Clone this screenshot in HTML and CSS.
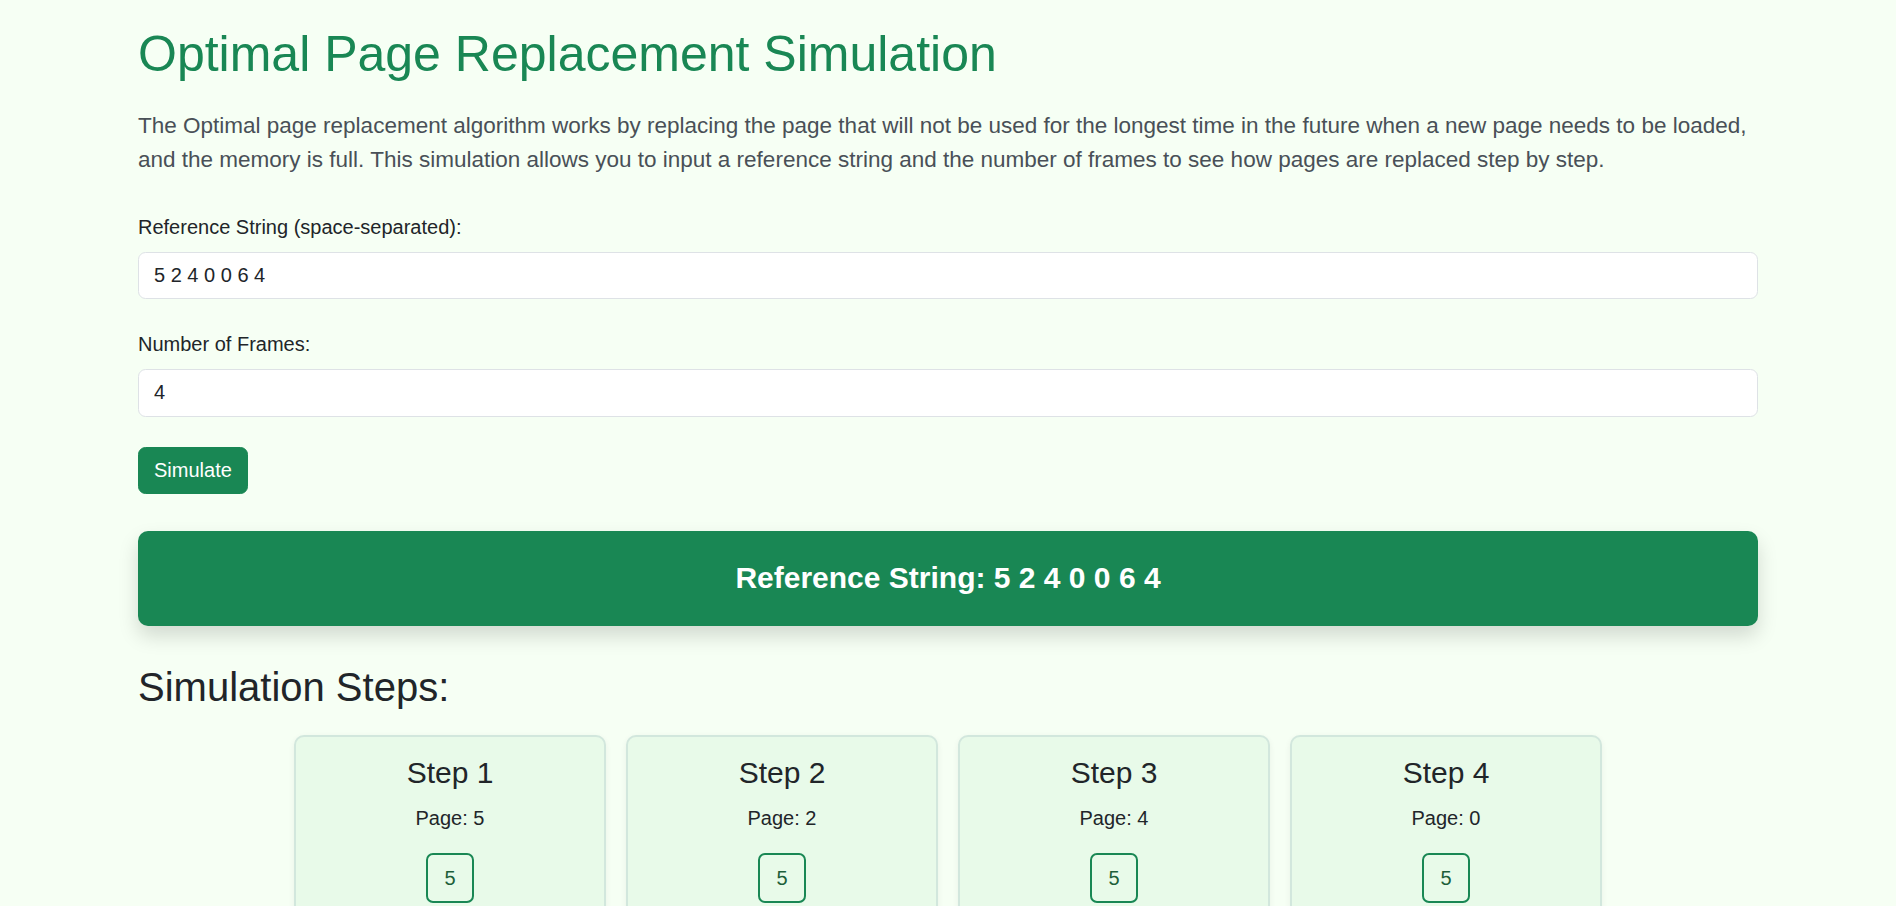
FILE: index.html
```html
<!DOCTYPE html>
<html lang="en">
<head>
<meta charset="utf-8">
<title>Optimal Page Replacement Simulation</title>
<link rel="stylesheet" href="styles.css">
</head>
<body>
<div class="container">
  <h1 class="title">Optimal Page Replacement Simulation</h1>
  <p class="lead">The Optimal page replacement algorithm works by replacing the page that will not be used for the longest time in the future when a new page needs to be loaded, and the memory is full. This simulation allows you to input a reference string and the number of frames to see how pages are replaced step by step.</p>

  <div class="field">
    <label class="form-label" for="ref">Reference String (space-separated):</label>
    <input class="form-control" id="ref" type="text" value="5 2 4 0 0 6 4">
  </div>
  <div class="field">
    <label class="form-label" for="frames">Number of Frames:</label>
    <input class="form-control" id="frames" type="text" value="4">
  </div>
  <button class="btn" type="button">Simulate</button>

  <div class="banner">
    <h4 class="banner-text">Reference String: 5 2 4 0 0 6 4</h4>
  </div>

  <h2 class="steps-title">Simulation Steps:</h2>

  <div class="steps">
    <div class="step-card">
      <h4 class="step-title">Step 1</h4>
      <p class="step-page">Page: 5</p>
      <div class="frames"><div class="frame">5</div></div>
    </div>
    <div class="step-card">
      <h4 class="step-title">Step 2</h4>
      <p class="step-page">Page: 2</p>
      <div class="frames"><div class="frame">5</div><div class="frame">2</div></div>
    </div>
    <div class="step-card">
      <h4 class="step-title">Step 3</h4>
      <p class="step-page">Page: 4</p>
      <div class="frames"><div class="frame">5</div><div class="frame">2</div><div class="frame">4</div></div>
    </div>
    <div class="step-card">
      <h4 class="step-title">Step 4</h4>
      <p class="step-page">Page: 0</p>
      <div class="frames"><div class="frame">5</div><div class="frame">2</div><div class="frame">4</div><div class="frame">0</div></div>
    </div>
    <div class="step-card">
      <h4 class="step-title">Step 5</h4>
      <p class="step-page">Page: 0</p>
      <div class="frames"><div class="frame">5</div><div class="frame">2</div><div class="frame">4</div><div class="frame">0</div></div>
    </div>
    <div class="step-card">
      <h4 class="step-title">Step 6</h4>
      <p class="step-page">Page: 6</p>
      <div class="frames"><div class="frame">6</div><div class="frame">2</div><div class="frame">4</div><div class="frame">0</div></div>
    </div>
    <div class="step-card">
      <h4 class="step-title">Step 7</h4>
      <p class="step-page">Page: 4</p>
      <div class="frames"><div class="frame">6</div><div class="frame">2</div><div class="frame">4</div><div class="frame">0</div></div>
    </div>
  </div>
</div>
</body>
</html>
```

FILE: styles.css
```css
* {
  box-sizing: border-box;
}

html, body {
  margin: 0;
  padding: 0;
}

body {
  background: #f6fff4;
  color: #212529;
  font-family: "Liberation Sans", Arial, Helvetica, sans-serif;
  font-size: 20px;
  line-height: 30px;
}

.container {
  max-width: 1650px;
  margin: 0 auto;
  padding: 24px 15px 40px;
}

.title {
  margin: 0 0 25px;
  font-size: 50px;
  line-height: 60px;
  font-weight: 400;
  color: #198754;
}

.lead {
  margin: 0 0 35px;
  font-size: 22.5px;
  line-height: 33.75px;
  font-weight: 400;
  color: #495057;
}

.field {
  margin-bottom: 30px;
}

.form-label {
  display: block;
  margin-bottom: 10px;
  font-size: 20px;
  line-height: 30px;
}

.form-control {
  display: block;
  width: 100%;
  height: 47.5px;
  padding: 0 15px;
  font-family: inherit;
  font-size: 20px;
  color: #212529;
  background: #ffffff;
  border: 1px solid #dee2e6;
  border-radius: 7.5px;
  outline: none;
}

.btn {
  display: block;
  height: 47.5px;
  padding: 0 15px;
  font-family: inherit;
  font-size: 20px;
  color: #ffffff;
  background: #198754;
  border: 1px solid #198754;
  border-radius: 7.5px;
  cursor: pointer;
}

.banner {
  margin-top: 36.5px;
  padding: 29.5px 20px;
  background: #198754;
  border-radius: 10px;
  box-shadow: 0 10px 20px rgba(0, 0, 0, 0.15);
  text-align: center;
}

.banner-text {
  margin: 0;
  font-size: 30px;
  line-height: 36px;
  font-weight: 700;
  color: #ffffff;
}

.steps-title {
  margin: 37px 0 24px;
  font-size: 40px;
  line-height: 48px;
  font-weight: 400;
}

.steps {
  display: flex;
  flex-wrap: wrap;
  justify-content: center;
  gap: 20px;
}

.step-card {
  width: 312px;
  padding: 18px 16px 16px;
  background: #e8fae9;
  border: 2px solid #d2e7dd;
  border-radius: 10px;
  box-shadow: 0 2px 6px rgba(0, 0, 0, 0.06);
  text-align: center;
}

.step-title {
  margin: 0 0 12px;
  font-size: 30px;
  line-height: 36px;
  font-weight: 400;
}

.step-page {
  margin: 0 0 20px;
}

.frames {
  display: flex;
  flex-direction: column;
  align-items: center;
  gap: 10px;
}

.frame {
  width: 48px;
  height: 50px;
  line-height: 46px;
  border: 2px solid #198754;
  border-radius: 7px;
  color: #1d5e3a;
  font-size: 20px;
}
```
